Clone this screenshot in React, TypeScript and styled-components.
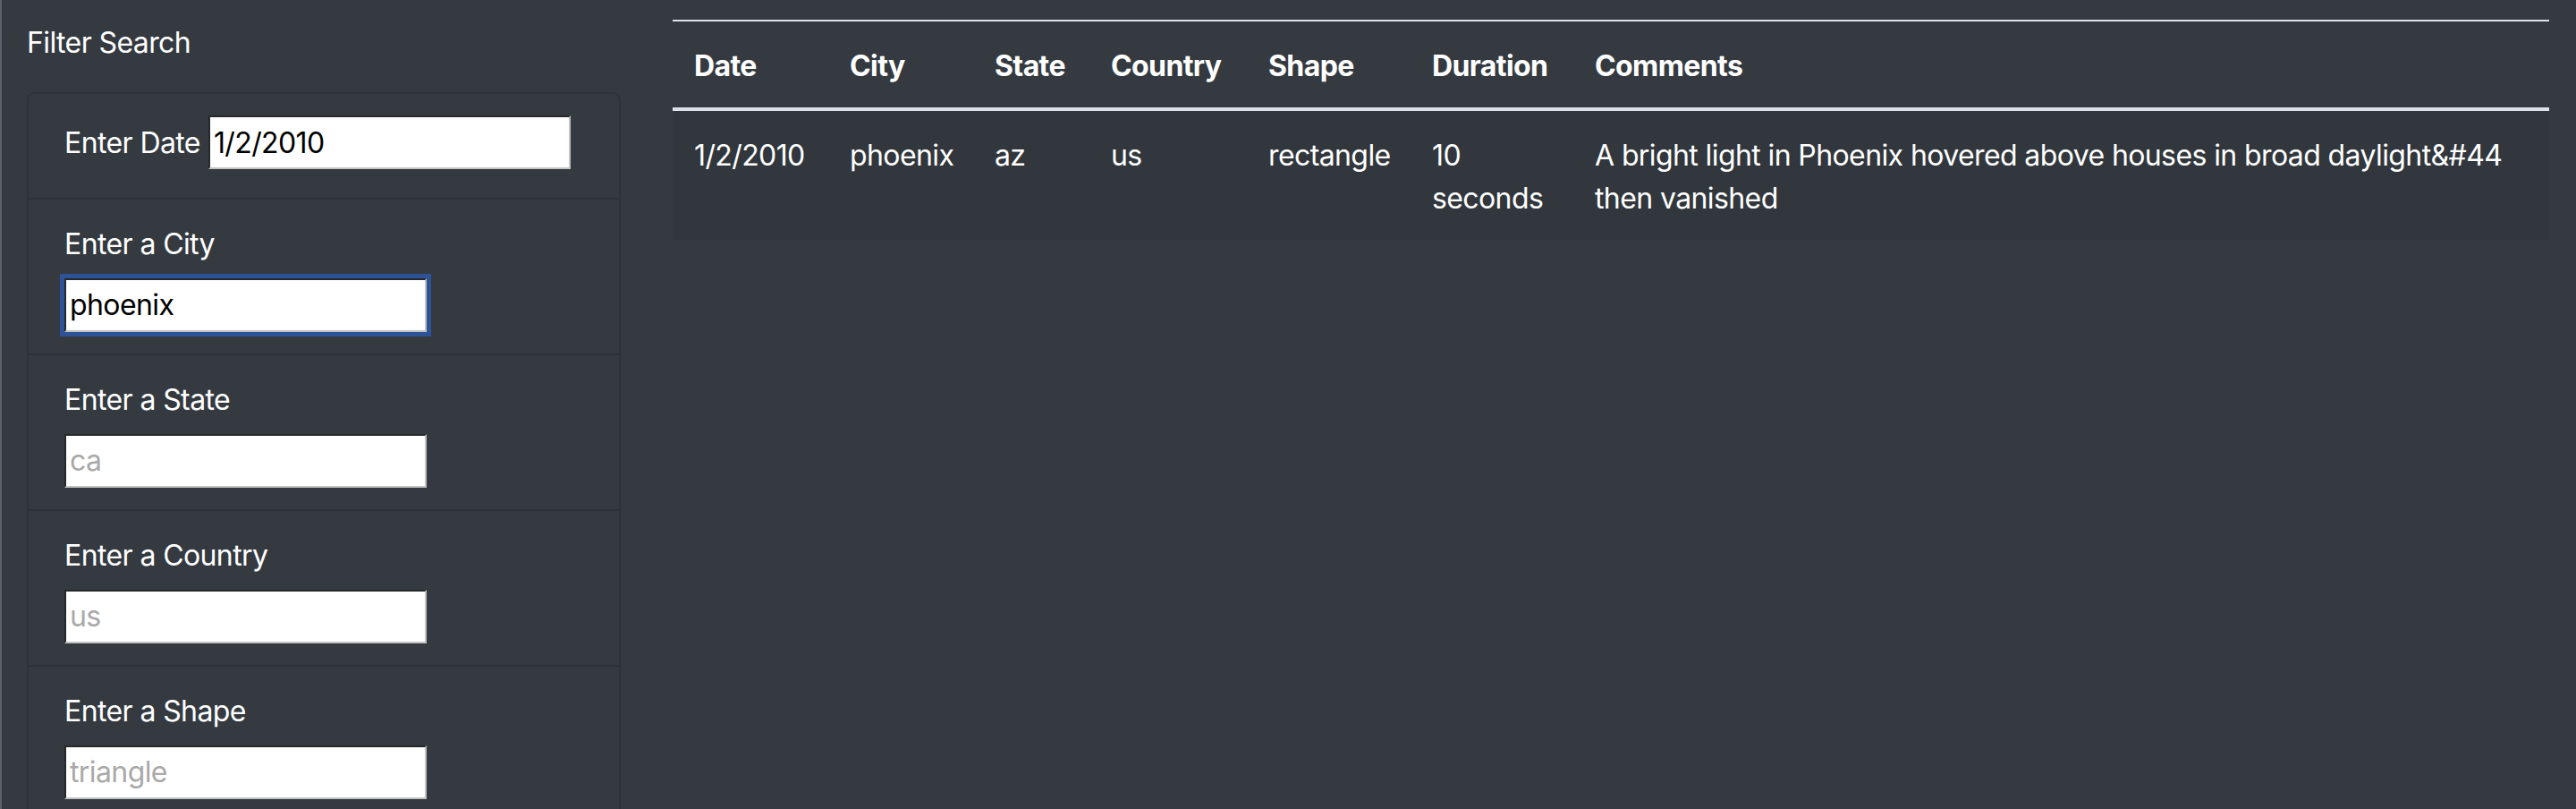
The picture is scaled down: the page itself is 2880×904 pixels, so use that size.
import styled, { createGlobalStyle } from "styled-components";

const GlobalStyle = createGlobalStyle`
  html, body {
    margin: 0;
    padding: 0;
    background-color: #343a40;
  }
  body {
    font-family: Inter, "Liberation Sans", sans-serif;
    font-size: 32px;
    line-height: 1.5;
    letter-spacing: -0.6px;
    color: #ffffff;
  }
  * {
    box-sizing: border-box;
  }
`;

const Page = styled.div`
  display: grid;
  grid-template-columns: 720px 1fr;
  min-height: 904px;
  border-left: 2px solid #5d6167;
`;

const Sidebar = styled.aside`
  padding: 22px 28px 0 28px;
  overflow: hidden;
  height: 904px;
`;

const Title = styled.div`
  padding-top: 2px;
  margin: 0 0 31px;
  line-height: 48px;
`;

const ListGroup = styled.ul`
  list-style: none;
  margin: 0;
  padding: 0;
  border: 2px solid rgba(0, 0, 0, 0.125);
  border-radius: 8px;
`;

const ListItem = styled.li`
  padding: 24px 40px;
  border-top: 2px solid rgba(0, 0, 0, 0.125);

  &:first-child {
    border-top: 0;
  }
`;

const InlineLabel = styled.label`
  display: inline-block;
  margin-bottom: 13px;
  line-height: 48px;
  margin-right: 9px;
`;

const BlockLabel = styled.label`
  display: block;
  padding-top: 2px;
  margin-bottom: 14px;
  line-height: 48px;
`;

const Input = styled.input<{ $focused?: boolean; $block?: boolean }>`
  display: ${(p) => (p.$block ? "block" : "inline-block")};
  width: 405px;
  height: 60px;
  padding: 0 4px;
  font-family: inherit;
  font-size: 32px;
  letter-spacing: -0.6px;
  color: #000000;
  background: #ffffff;
  border-style: solid;
  border-width: 2px;
  border-color: #25292d #c3c3c3 #c3c3c3 #25292d;
  border-radius: 0;
  outline: ${(p) => (p.$focused ? "5px solid #2d5296" : "none")};
  outline-offset: 0;

  &::placeholder {
    color: #a9a9a9;
  }
`;

const Main = styled.main`
  padding: 22px 30px 0 30px;
`;

const Table = styled.table`
  width: 100%;
  table-layout: fixed;
  border-collapse: collapse;
  color: #ffffff;
`;

const Col = styled.col<{ $w?: number }>`
  width: ${(p) => (p.$w ? `${p.$w}px` : "auto")};
`;

const HeadCell = styled.th`
  text-align: left;
  font-weight: 700;
  padding: 26px 24px 22px;
  vertical-align: bottom;
  border-top: 2px solid #dee2e6;
  border-bottom: 4px solid #dee2e6;
  white-space: nowrap;
  line-height: 48px;
`;

const Row = styled.tr<{ $striped?: boolean }>`
  background-color: ${(p) => (p.$striped ? "rgba(0, 0, 0, 0.05)" : "transparent")};
`;

const Cell = styled.td`
  padding: 26px 24px 22px;
  vertical-align: top;
  line-height: 48px;
`;

const columns = [
  { key: "datetime", label: "Date", width: 174 },
  { key: "city", label: "City", width: 162 },
  { key: "state", label: "State", width: 130 },
  { key: "country", label: "Country", width: 176 },
  { key: "shape", label: "Shape", width: 183 },
  { key: "duration", label: "Duration", width: 182 },
  { key: "comments", label: "Comments" },
];

const sightings: Record<string, string>[] = [
  {
    datetime: "1/2/2010",
    city: "phoenix",
    state: "az",
    country: "us",
    shape: "rectangle",
    duration: "10 seconds",
    comments:
      "A bright light in Phoenix hovered above houses in broad daylight&#44 then vanished",
  },
];

const filters = [
  { id: "city", label: "Enter a City", value: "phoenix", placeholder: "", focused: true },
  { id: "state", label: "Enter a State", value: "", placeholder: "ca" },
  { id: "country", label: "Enter a Country", value: "", placeholder: "us" },
  { id: "shape", label: "Enter a Shape", value: "", placeholder: "triangle" },
];

export default function App() {
  return (
    <>
      <GlobalStyle />
      <Page>
        <Sidebar>
          <Title>Filter Search</Title>
          <ListGroup>
            <ListItem>
              <InlineLabel htmlFor="datetime">Enter Date</InlineLabel>
              <Input id="datetime" type="text" defaultValue="1/2/2010" />
            </ListItem>
            {filters.map((f) => (
              <ListItem key={f.id}>
                <BlockLabel htmlFor={f.id}>{f.label}</BlockLabel>
                <Input
                  id={f.id}
                  type="text"
                  $block
                  $focused={f.focused}
                  defaultValue={f.value}
                  placeholder={f.placeholder}
                />
              </ListItem>
            ))}
          </ListGroup>
        </Sidebar>
        <Main>
          <Table>
            <colgroup>
              {columns.map((c) => (
                <Col key={c.key} $w={c.width} />
              ))}
            </colgroup>
            <thead>
              <tr>
                {columns.map((c) => (
                  <HeadCell key={c.key}>{c.label}</HeadCell>
                ))}
              </tr>
            </thead>
            <tbody>
              {sightings.map((s, i) => (
                <Row key={i} $striped={i % 2 === 0}>
                  {columns.map((c) => (
                    <Cell key={c.key}>{s[c.key]}</Cell>
                  ))}
                </Row>
              ))}
            </tbody>
          </Table>
        </Main>
      </Page>
    </>
  );
}
